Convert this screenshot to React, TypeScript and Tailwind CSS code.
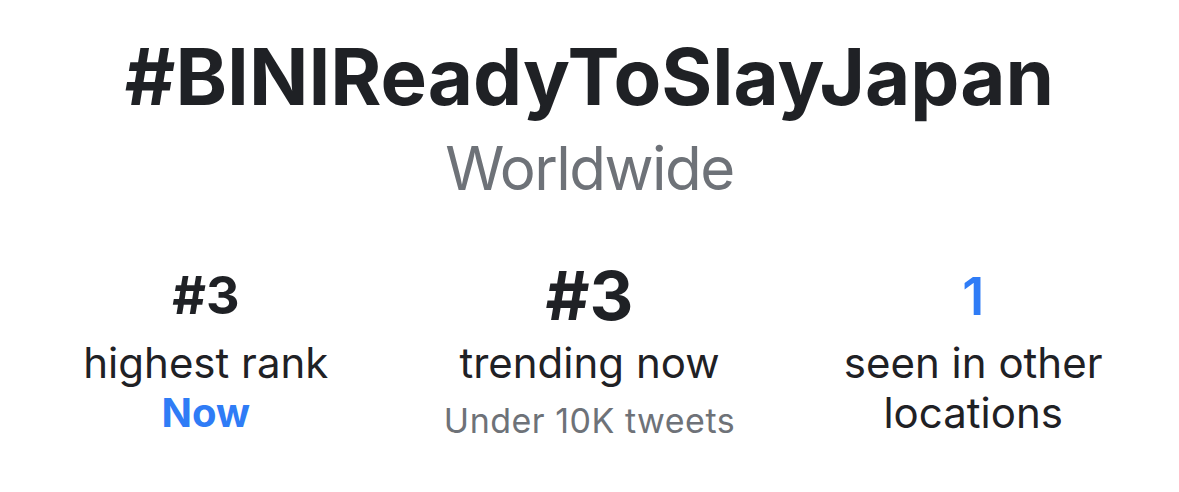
import React from 'react';

const font = { fontFamily: 'Inter, "Noto Sans", sans-serif' };

type Stat = {
  value: string;
  valueClass: string;
  label: React.ReactNode;
  sub?: React.ReactNode;
};

const stats: Stat[] = [
  {
    value: '#3',
    valueClass: 'pt-[9px] text-[52px] font-bold text-[#1f2125]',
    label: 'highest rank',
    sub: <span className="text-[40px] font-bold leading-[50px] text-[#2f7cf6]">Now</span>,
  },
  {
    value: '#3',
    valueClass: 'text-[68px] font-bold text-[#1f2125]',
    label: 'trending now',
    sub: (
      <span className="mt-[8px] text-[34px] leading-[50px] tracking-[0.5px] text-[#6e7278]">
        Under 10K tweets
      </span>
    ),
  },
  {
    value: '1',
    valueClass: 'pt-[10px] text-[52px] font-semibold text-[#2f7cf6]',
    label: (
      <>
        seen in other
        <br />
        locations
      </>
    ),
  },
];

const App: React.FC = () => {
  return (
    <main className="w-[1179px] h-[492px] bg-white overflow-hidden" style={font}>
      <div className="flex flex-col items-center pt-[38px]">
        <h1 className="text-[78px] font-bold leading-none text-[#1f2125]">#BINIReadyToSlayJapan</h1>
        <p className="mt-[22px] text-[60px] leading-none tracking-[-1.5px] text-[#6e7278]">Worldwide</p>
      </div>

      {/* stats row */}
      <div className="grid grid-cols-3 px-[14px] mt-[63px]">
        {stats.map((s, i) => (
          <div key={i} className="flex flex-col items-center text-center">
            <div className="h-[77px] flex items-start justify-center">
              <span className={`leading-none ${s.valueClass}`}>{s.value}</span>
            </div>
            <div className="text-[42px] leading-[50px] text-[#1f2125]">{s.label}</div>
            {s.sub}
          </div>
        ))}
      </div>
    </main>
  );
};

export default App;
